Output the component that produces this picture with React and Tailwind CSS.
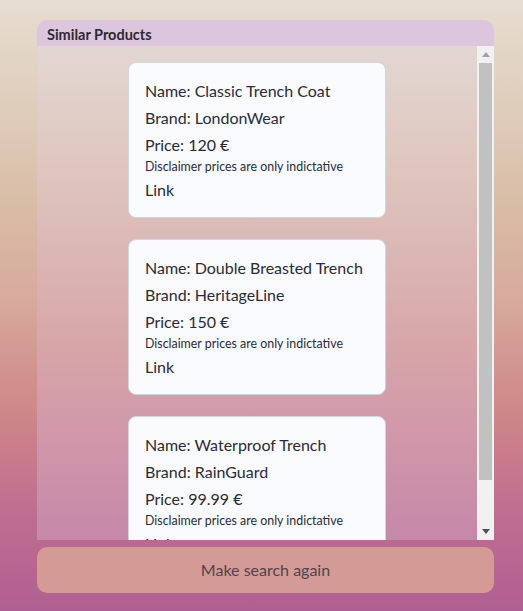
import React from "react";

const products = [
  { name: "Classic Trench Coat", brand: "LondonWear", price: "120 €" },
  { name: "Double Breasted Trench", brand: "HeritageLine", price: "150 €" },
  { name: "Waterproof Trench", brand: "RainGuard", price: "99.99 €" },
];

function Card({ p }) {
  return (
    <div className="w-[258px] shrink-0 rounded-[8px] border border-[#cdd6e2] bg-[#f9fbfe] px-[16px] pt-[16px] pb-[15px] text-[#2b2b34]">
      <div className="text-[16px] leading-[24px]">Name: {p.name}</div>
      <div className="mt-[3px] text-[16px] leading-[24px]">Brand: {p.brand}</div>
      <div className="mt-[3px] text-[16px] leading-[24px]">Price: {p.price}</div>
      <div className="mt-[1px] text-[12.4px] leading-[18px]">Disclaimer prices are only indictative</div>
      <div className="mt-[2px] text-[16px] leading-[24px]">Link</div>
    </div>
  );
}

export default function App() {
  return (
    <div
      className="h-[611px] w-[523px] overflow-hidden pt-[20px] pl-[37px]"
      style={{
        fontFamily: "Lato, 'Open Sans', sans-serif",
        background:
          "linear-gradient(180deg, #e6ddd0 0%, #dcc6b2 25%, #d9bda6 33%, #d7aa9d 49%, #cf8c88 65%, #c97c8b 74%, #c07190 82%, #b05f92 100%)",
      }}
    >
      <div className="flex w-[457px] flex-col">
        <div className="flex h-[26px] items-center rounded-t-[10px] bg-[#dbc6de] pt-[3px] pl-[10px] text-[14.5px] leading-[20px] font-bold text-[#2b2b33]">
          Similar Products
        </div>
        <div className="flex h-[494px]">
          <div
            className="flex flex-1 flex-col items-center gap-[21px] overflow-hidden pt-[16px]"
            style={{
              background:
                "linear-gradient(180deg, #e2d7d3 0%, #dfc9c0 21%, #dbb8b5 41%, #d7a5a8 61%, #cf96a9 81%, #c588a9 100%)",
            }}
          >
            {products.map((p) => (
              <Card key={p.name} p={p} />
            ))}
          </div>
          <div className="flex w-[17px] flex-col bg-[#f1f1f1]">
            <div className="flex h-[17px] items-center justify-center">
              <svg width="8" height="5" viewBox="0 0 8 5">
                <polygon points="4,0 8,5 0,5" fill="#a3a3a3" />
              </svg>
            </div>
            <div className="mx-[2px] h-[417px] bg-[#c1c1c1]" />
            <div className="flex-1" />
            <div className="flex h-[17px] items-center justify-center">
              <svg width="8" height="5" viewBox="0 0 8 5">
                <polygon points="0,0 8,0 4,5" fill="#505050" />
              </svg>
            </div>
          </div>
        </div>
        <button className="mt-[7px] flex h-[46px] items-center justify-center rounded-[10px] bg-[#d49a96] text-[16px] text-[#4a4650]">
          Make search again
        </button>
      </div>
    </div>
  );
}
